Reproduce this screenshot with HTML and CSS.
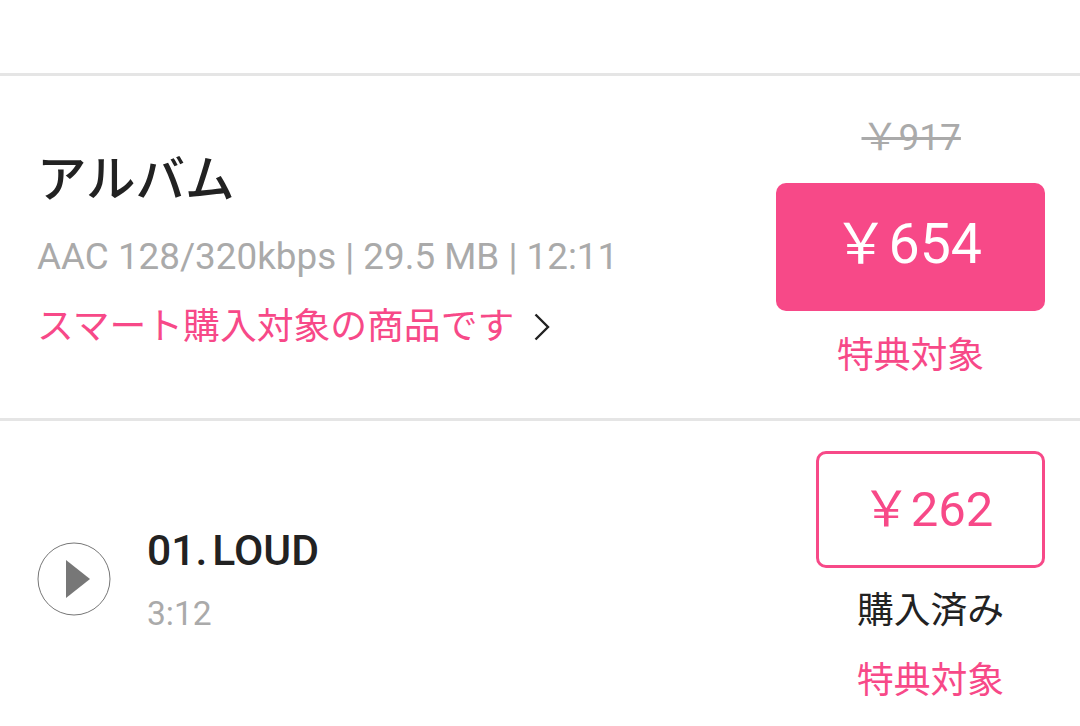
FILE: index.html
```html
<!DOCTYPE html>
<html lang="ja">
<head>
  <meta charset="UTF-8">
  <title>アルバム</title>
  <link rel="stylesheet" href="styles.css">
</head>
<body>

  <div class="top-space"></div>

  <div class="album-row">
    <div class="album-info">
      <h2>アルバム</h2>
      <p class="meta">AAC 128/320kbps | 29.5 MB | 12:11</p>
      <p class="smart">スマート購入対象の商品です
        <svg class="chevron" width="18" height="28" viewBox="0 0 18 28"><path d="M2.5 1.5 L15 14 L2.5 26.5" fill="none" stroke="#222" stroke-width="2.4"/></svg>
      </p>
    </div>
    <div class="album-buy">
      <div class="old-price">￥917</div>
      <div class="btn btn-fill">￥654</div>
      <div class="bonus">特典対象</div>
    </div>
  </div>

  <div class="track-row">
    <div class="play">
      <svg width="74" height="74" viewBox="0 0 74 74"><circle cx="37" cy="37" r="36" fill="none" stroke="#777" stroke-width="1"/><path d="M29 18 L53 37 L29 56 Z" fill="#777"/></svg>
    </div>
    <div class="track-info">
      <div class="track-name">01.<span class="thin-gap"></span>LOUD</div>
      <div class="track-time">3:12</div>
    </div>
    <div class="track-buy">
      <div class="btn btn-line">￥262</div>
      <div class="bought">購入済み</div>
      <div class="bonus">特典対象</div>
    </div>
  </div>

</body>
</html>
```

FILE: styles.css
```css
* {
  box-sizing: border-box;
}

html, body {
  height: 100%;
  overflow: hidden;
}

body {
  margin: 0;
  background: #fff;
  color: #222;
  font-family: Roboto, "Noto Sans CJK JP", sans-serif;
}

.top-space {
  height: 76px;
  border-bottom: 3px solid #e5e5e5;
}

.album-row {
  height: 345px;
  display: flex;
  justify-content: space-between;
  align-items: flex-start;
  padding: 0 35px 0 40px;
  border-bottom: 3px solid #e5e5e5;
}

h2 {
  margin: 69px 0 0 -3px;
  font-size: 49.5px;
  font-weight: 500;
  line-height: 70px;
}

.meta {
  margin: 20px 0 0 -3px;
  font-size: 36.8px;
  line-height: 44px;
  color: #aaa;
}

.smart {
  margin: 24px 0 0 -3px;
  font-size: 36.8px;
  line-height: 48px;
  color: #f74988;
  display: flex;
  align-items: center;
}

.chevron {
  margin: 0 0 0 19px;
}

.album-buy {
  width: 269px;
  text-align: center;
}

.old-price {
  width: 98px;
  margin: 40px auto 0;
  height: 44px;
  font-size: 37px;
  line-height: 44px;
  color: #aaa;
  text-decoration: line-through;
  white-space: nowrap;
}

.btn {
  display: flex;
  align-items: center;
  justify-content: center;
  border-radius: 10px;
  white-space: nowrap;
}

.btn-fill {
  height: 128px;
  margin-top: 23px;
  padding: 0 6px 16px 0;
  background: #f74988;
  color: #fff;
  font-size: 55.5px;
}

.bonus {
  font-size: 36.8px;
  line-height: 48px;
  color: #f74988;
}

.album-buy .bonus {
  margin-top: 21px;
}

.track-row {
  display: flex;
  align-items: flex-start;
  padding: 30px 35px 0 37px;
}

.play {
  margin-top: 91px;
  width: 74px;
  height: 74px;
}

.track-info {
  flex: 1;
  margin: 73px 0 0 36px;
}

.track-name {
  font-size: 42.6px;
  font-weight: 500;
  line-height: 52px;
}

.thin-gap {
  margin-left: 5px;
}

.track-time {
  margin-top: 18px;
  font-size: 33.6px;
  line-height: 40px;
  color: #aaa;
}

.track-buy {
  width: 229px;
  text-align: center;
}

.btn-line {
  height: 117px;
  padding: 0 6px 10px 0;
  border: 3px solid #f74988;
  color: #f74988;
  font-size: 49px;
}

.bought {
  margin-top: 19px;
  font-size: 36.8px;
  line-height: 48px;
}

.track-buy .bonus {
  margin-top: 22px;
}
```
